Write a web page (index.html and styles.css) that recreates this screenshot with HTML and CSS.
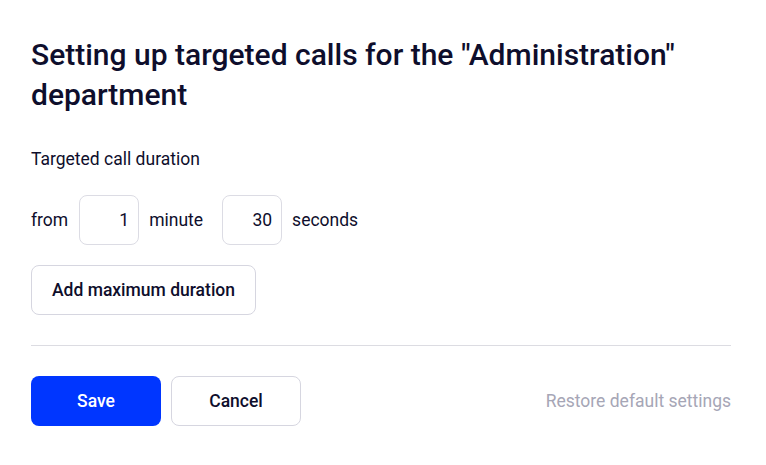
FILE: index.html
```html
<!DOCTYPE html>
<html>
<head>
<meta charset="utf-8">
<link rel="stylesheet" href="styles.css">
</head>
<body>
<div class="dialog">
  <h1 class="title">Setting up targeted calls for the "Administration" department</h1>
  <div class="label">Targeted call duration</div>
  <div class="duration">
    <div class="group">
      <span>from</span>
      <div class="field">1</div>
      <span>minute</span>
    </div>
    <div class="group">
      <div class="field">30</div>
      <span>seconds</span>
    </div>
  </div>
  <button class="btn btn-outline btn-add">Add maximum duration</button>
  <div class="divider"></div>
  <div class="footer">
    <div class="actions">
      <button class="btn btn-primary">Save</button>
      <button class="btn btn-outline btn-cancel">Cancel</button>
    </div>
    <span class="restore">Restore default settings</span>
  </div>
</div>
</body>
</html>
```
FILE: styles.css
```css
* { box-sizing: border-box; }
html, body { margin: 0; padding: 0; background: #fff; }
body {
  font-family: Roboto, "Liberation Sans", sans-serif;
  color: #0e0e2c;
}
.dialog {
  width: 766px;
  padding: 35px 35px 0 31px;
}
.title {
  margin: 0;
  font-size: 30px;
  font-weight: 500;
  line-height: 40px;
  color: #0e0e2c;
}
.label {
  margin-top: 32px;
  font-size: 17.5px;
  line-height: 24px;
}
.duration {
  display: flex;
  align-items: center;
  gap: 19px;
  margin-top: 24px;
  font-size: 17.5px;
}
.group {
  display: flex;
  align-items: center;
  gap: 10px;
}
.group:first-child .field {
  margin-left: 1px;
}
.field {
  width: 60px;
  height: 50px;
  border: 1px solid #dcdce4;
  border-radius: 8px;
  display: flex;
  align-items: center;
  justify-content: flex-end;
  padding-right: 9px;
}
.btn {
  font-family: Roboto, "Liberation Sans", sans-serif;
  font-size: 17.5px;
  font-weight: 500;
  height: 50px;
  border-radius: 8px;
  cursor: pointer;
  color: #0e0e2c;
  padding: 0;
}
.btn-outline {
  background: #fff;
  border: 1px solid #d6d6e0;
}
.btn-add {
  margin-top: 20px;
  width: 225px;
  display: block;
}
.divider {
  margin-top: 30px;
  height: 1px;
  background: #dcdce2;
}
.footer {
  margin-top: 30px;
  display: flex;
  align-items: center;
  justify-content: space-between;
}
.actions {
  display: flex;
  gap: 10px;
}
.btn-primary {
  width: 130px;
  background: #0036ff;
  border: none;
  color: #fff;
}
.btn-cancel {
  width: 130px;
}
.restore {
  font-size: 17.5px;
  color: #a6a6b6;
}
```
